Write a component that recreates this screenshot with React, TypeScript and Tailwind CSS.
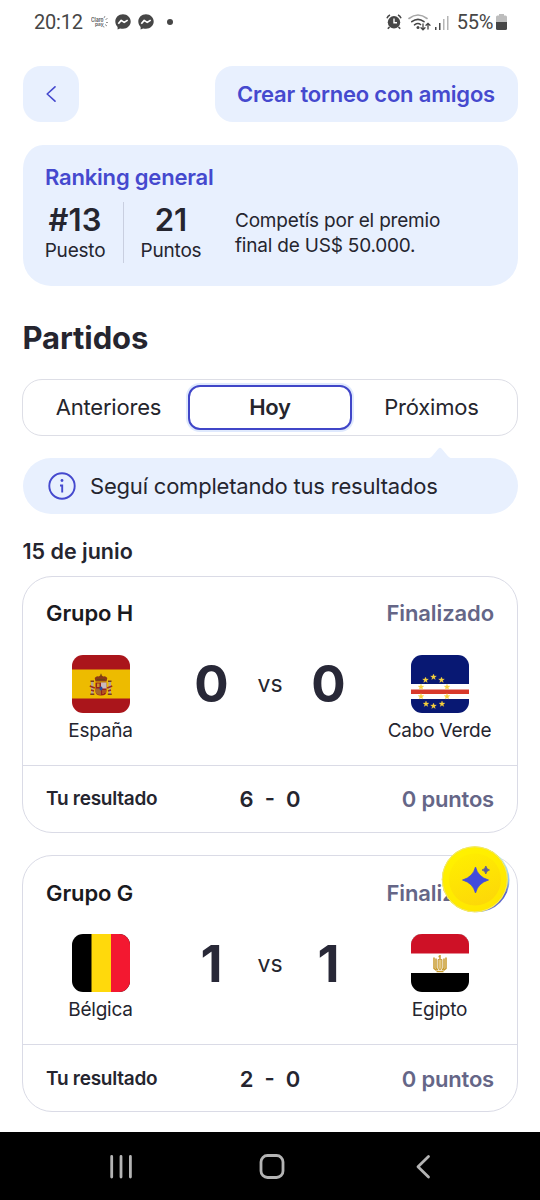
import type { ReactNode } from 'react';

type Match = {
  group: string;
  home: string;
  away: string;
  homeFlag: ReactNode;
  awayFlag: ReactNode;
  score: [number, number];
  guess: [number, number];
};

const STAR = 'M0 -3L.8 -1L2.9 -.9L1.2 .4L1.8 2.4L0 1.3L-1.8 2.4L-1.2 .4L-2.9 -.9L-.8 -1Z';

const CAPE_STARS = [
  [22.5, 22], [14.5, 25], [30.5, 25], [10, 32], [36, 32],
  [10, 41.5], [36, 41.5], [15, 49], [31, 49], [22.5, 51],
];

const SpainFlag = () => (
  <svg viewBox="0 0 58 58" className="size-full">
    <rect width="58" height="58" fill="#aa151b" />
    <rect y="14.5" width="58" height="29" fill="#edbb00" />
    <path d="M19 27h2.5v12H19zM36.5 27H39v12h-2.5z" fill="#b9a58c" />
    <path d="M18.5 25.5h3.5v1.5h-3.5zM36 25.5h3.5V27H36zM18.3 38.5h4V40h-4zM35.8 38.5h4V40h-4z" fill="#7a3b1e" />
    <path d="M17.8 31l5 2M40.2 31l-5 2M19 35l3 1M39 35l-3 1" stroke="#9a2a1b" strokeWidth="1.4" />
    <path d="M23.5 27.5h11V36q0 4.5-5.5 4.5T23.5 36z" fill="#98201c" />
    <path d="M29 27.5h5.5v6H29z" fill="#c9b8bd" />
    <path d="M23.5 33.5H29V40q-5.5 0-5.5-4z" fill="#a8662a" />
    <path d="M25 28.5h2.5V32H25z" fill="#c8922b" />
    <path d="M31 35v4M33 35v3" stroke="#d9a520" strokeWidth=".8" />
    <ellipse cx="29" cy="33.5" rx="1.5" ry="1.9" fill="#274a9c" />
    <path d="M23.5 26.5l-.8-3.5q1.8-2.5 4-1.5L29 20l2.3 1.5q2.2-1 4 1.5l-.8 3.5z" fill="#8a3a16" />
    <path d="M29 18.8v3M25 24.5h8" stroke="#6c4212" />
  </svg>
);

const CapeVerdeFlag = () => (
  <svg viewBox="0 0 58 58" className="size-full">
    <rect width="58" height="58" fill="#081873" />
    <rect y="29" width="58" height="15" fill="#fff" />
    <rect y="34.5" width="58" height="4.5" fill="#d8392b" />
    {CAPE_STARS.map(([x, y]) => (
      <path key={`${x}-${y}`} d={STAR} transform={`translate(${x} ${y})`} fill="#f7d13c" stroke="#f7d13c" strokeWidth=".3" />
    ))}
  </svg>
);

const BelgiumFlag = () => (
  <svg viewBox="0 0 58 58" className="size-full">
    <rect width="58" height="58" fill="#000" />
    <rect x="19.5" width="19.5" height="58" fill="#ffd90c" />
    <rect x="39" width="19" height="58" fill="#f31830" />
  </svg>
);

const EgyptFlag = () => (
  <svg viewBox="0 0 58 58" className="size-full">
    <rect width="58" height="58" fill="#000" />
    <rect width="58" height="39" fill="#fff" />
    <rect width="58" height="19.5" fill="#ce1126" />
    <g fill="none" stroke="#c79a2c">
      <path d="M23 23.5v11l2.5 2M25 24.5V34l2 2M35 23.5v11l-2.5 2M33 24.5V34l-2 2" strokeWidth="1.5" />
      <path d="M29 21v4M27.5 22.5h2M25.5 37.5h7" strokeWidth="1.5" />
    </g>
    <path d="M27 25.5h4v8L29 36l-2-2.5z" fill="#e3c67c" stroke="#b98a20" strokeWidth=".7" />
  </svg>
);

const MATCHES: Match[] = [
  {
    group: 'Grupo H',
    home: 'España',
    away: 'Cabo Verde',
    homeFlag: <SpainFlag />,
    awayFlag: <CapeVerdeFlag />,
    score: [0, 0],
    guess: [6, 0],
  },
  {
    group: 'Grupo G',
    home: 'Bélgica',
    away: 'Egipto',
    homeFlag: <BelgiumFlag />,
    awayFlag: <EgyptFlag />,
    score: [1, 1],
    guess: [2, 0],
  },
];

const MessengerIcon = () => (
  <svg viewBox="0 0 16 16" className="size-4">
    <path d="M8 .3C3.6.3.3 3.5.3 7.6c0 2.2.9 4 2.3 5.3v2.7l2.5-1.2c.9.3 1.9.4 2.9.4 4.4 0 7.7-3.2 7.7-7.2S12.4.3 8 .3z" fill="#464646" />
    <path d="M3.3 9.7l2.9-3.3 3 2 3.5-2.3" fill="none" stroke="#fff" strokeWidth="1.7" strokeLinejoin="round" />
  </svg>
);

const StatusBar = () => (
  <div className="flex h-11 items-center pr-[33px] pl-[34px] font-['Roboto',sans-serif] text-[#464646]">
    <span className="w-[50px] text-[20px] leading-none tracking-[-0.2px]">20:12</span>
    <svg viewBox="0 0 17 14" className="ml-[7px] h-[14px] w-[17px] font-['Inter',sans-serif]">
      <text x="0" y="7" fontSize="5.5" fontWeight="700" textLength="12.5" lengthAdjust="spacingAndGlyphs" fill="#666">Claro</text>
      <text x="4" y="11" fontSize="5" fontWeight="700" textLength="8.5" lengthAdjust="spacingAndGlyphs" fill="#666">pay</text>
      <path d="M13 3l1-2M14.5 5l2-2M15 7.5h2M14 9.5l2 1.5M12.5 11l.5 1.5" stroke="#777" strokeWidth=".8" />
    </svg>
    <div className="ml-[7px] flex gap-[7px]">
      <MessengerIcon />
      <MessengerIcon />
    </div>
    <div className="ml-[13px] size-1.5 rounded-full bg-[#464646]" />
    <svg viewBox="0 0 16 16" className="ml-auto h-4 w-4">
      <circle cx="8" cy="8.3" r="6.2" fill="#464646" />
      <path d="M1 4.2Q1.8 2 4 1M15 4.2Q14.2 2 12 1M3.5 13l-1.7 1.8M12.5 13l1.7 1.8" fill="none" stroke="#464646" strokeWidth="1.6" />
      <path d="M8 4.5v4.2h3" fill="none" stroke="#fff" strokeWidth="1.4" />
    </svg>
    <svg viewBox="0 0 23 17" className="ml-1.5 h-[17px] w-[23px]">
      <g fill="none" strokeLinecap="round">
        <path d="M1 4.5Q10 -2.5 19 4.5" stroke="#a8a8a8" strokeWidth="1.6" />
        <path d="M3.8 7.7Q10 3 16 7.7" stroke="#464646" strokeWidth="1.6" />
        <path d="M6.5 10.8Q10 8.4 12.5 10.5" stroke="#464646" strokeWidth="1.6" />
        <path d="M15 10v5.5M13 13.8l2 2 2-2M20 15V9.5M18 11.3l2-2 2 2" stroke="#464646" strokeWidth="1.3" />
      </g>
      <circle cx="10" cy="13.6" r="1.5" fill="#464646" />
    </svg>
    <svg viewBox="0 0 14 15" className="ml-1 h-[15px] w-[14px]">
      <rect x="0" y="12" width="1.5" height="3" fill="#464646" />
      <rect x="4" y="8" width="1.5" height="7" fill="#464646" />
      <rect x="8" y="4" width="1.5" height="11" fill="#b5b5b5" />
      <rect x="12" y="1" width="1.5" height="14" fill="#b5b5b5" />
    </svg>
    <span className="ml-2 text-[20px] leading-none tracking-[-0.3px]">55%</span>
    <svg viewBox="0 0 11 16" className="ml-[3px] h-4 w-[11px]">
      <path d="M3 0h5v1.5h1.5Q11 1.5 11 3v5H0V3q0-1.5 1.5-1.5H3z" fill="#bdbdbd" />
      <path d="M0 8h11v6.5q0 1.5-1.5 1.5h-8Q0 16 0 14.5z" fill="#464646" />
    </svg>
  </div>
);

const RankingCard = () => (
  <section className="mt-[22.5px] h-[141px] rounded-t-[20px_24px] rounded-b-[28px] bg-[#e8f0fe] px-[22.5px] pt-[18.5px]">
    <h2 className="text-[22px] leading-7 font-semibold tracking-[-0.2px] text-[#4549ce]">Ranking general</h2>
    <div className="mt-[11px] flex items-center">
      <div className="flex w-[60px] flex-col items-center">
        <span className="text-[31px] leading-9 font-semibold">#13</span>
        <span className="text-[19px] leading-[25px] tracking-[-0.2px]">Puesto</span>
      </div>
      <div className="ml-[17.5px] h-[61px] w-px bg-[#c9cfe0]" />
      <div className="ml-[17px] flex w-[61px] flex-col items-center">
        <span className="text-[31px] leading-9 font-semibold">21</span>
        <span className="text-[19px] leading-[25px] tracking-[-0.2px]">Puntos</span>
      </div>
      <p className="ml-[33.5px] text-[19px] leading-[25px] tracking-[-0.2px] whitespace-nowrap">
        Competís por el premio
        <br />
        final de US$ 50.000.
      </p>
    </div>
  </section>
);

const Tabs = () => (
  <div className="-mx-[0.5px] mt-[21px] grid h-[57px] grid-cols-[1fr_164px_1fr] items-center rounded-[20px] border border-[#dddee6] text-center text-[22px] tracking-[-0.2px] text-[#25252d]">
    <button className="pt-px pl-1.5">Anteriores</button>
    <button className="h-[45px] rounded-xl border-2 border-[#4046c8] bg-white pt-px font-semibold shadow-[0_0_0_2px_#dfe9fd]">
      Hoy
    </button>
    <button className="pt-px pr-1.5">Próximos</button>
  </div>
);

const Team = ({ name, flag }: { name: string; flag: ReactNode }) => (
  <div className="flex w-[110px] flex-col items-center">
    <div className="size-[58px] overflow-hidden rounded-[11px]">{flag}</div>
    <span className="mt-1.5 text-[19px] leading-6 tracking-[-0.2px] whitespace-nowrap">{name}</span>
  </div>
);

const MatchCard = ({ match }: { match: Match }) => (
  <article className="h-[257px] rounded-[30px] border border-[#dadbe6]">
    <div className="h-[189px] border-b border-[#dadbe6] pr-[22.5px] pl-[22.5px] pt-[22.5px]">
      <div className="flex justify-between px-[0.5px] text-[22px] leading-7 tracking-[-0.1px]">
        <h3 className="font-semibold text-[#1a1a1f]">{match.group}</h3>
        <span className="font-semibold text-[#656687]">Finalizado</span>
      </div>
      <div className="mt-[27.5px] flex">
        <Team name={match.home} flag={match.homeFlag} />
        <div className="flex h-[58px] flex-1 items-center justify-center pt-0.5">
          <span className="w-[46px] text-center text-[51px] font-bold text-[#282837]">{match.score[0]}</span>
          <span className="w-[71px] text-center text-[23px]">vs</span>
          <span className="w-[46px] text-center text-[51px] font-bold text-[#282837]">{match.score[1]}</span>
        </div>
        <Team name={match.away} flag={match.awayFlag} />
      </div>
    </div>
    <div className="grid h-[66px] grid-cols-3 items-center px-[23px] pt-0.5">
      <span className="text-[19px] font-semibold tracking-[-0.25px]">Tu resultado</span>
      <span className="text-center text-[22px] font-semibold whitespace-pre">
        {match.guess[0]}  -  {match.guess[1]}
      </span>
      <span className="text-right text-[22px] font-semibold tracking-[-0.2px] text-[#656687]">0 puntos</span>
    </div>
  </article>
);

const SparkleButton = () => (
  <button className="absolute top-[845px] left-[441px] size-[70px]">
    <svg viewBox="0 0 70 70" className="size-full">
      <defs>
        <linearGradient id="edge" x1="1" y1="0" x2=".3" y2="1">
          <stop offset=".15" stopColor="#b9f0f5" />
          <stop offset=".35" stopColor="#8fc4f0" />
          <stop offset=".5" stopColor="#5661cc" />
          <stop offset=".75" stopColor="#6670d8" />
          <stop offset="1" stopColor="#b9f5f5" />
        </linearGradient>
        <linearGradient id="coin" x1=".2" y1="0" x2=".8" y2="1">
          <stop offset="0" stopColor="#fff200" />
          <stop offset="1" stopColor="#ffe600" />
        </linearGradient>
        <linearGradient id="face" x1=".2" y1="0" x2=".6" y2="1">
          <stop offset="0" stopColor="#ffee00" />
          <stop offset="1" stopColor="#fdd808" />
        </linearGradient>
      </defs>
      <circle cx="36.2" cy="35" r="32.3" fill="url(#edge)" />
      <circle cx="33.8" cy="34.3" r="33" fill="url(#coin)" />
      <circle cx="33.8" cy="34.3" r="32.5" fill="none" stroke="#efe678" />
      <circle cx="34" cy="34.5" r="26" fill="url(#face)" />
      <path d="M34.5 22Q37 32 47.5 35Q37 38 34.5 48Q32 38 21.5 35Q32 32 34.5 22Z" fill="#424bdc" stroke="#424bdc" strokeWidth=".8" />
      <path d="M44.8 21Q45.5 24.3 48.5 25Q45.5 25.7 44.8 29Q44.1 25.7 41 25Q44.1 24.3 44.8 21Z" fill="#5a5c9a" stroke="#5a5c9a" strokeWidth=".8" />
    </svg>
  </button>
);

const NavBar = () => (
  <nav className="flex h-[68px] items-center bg-black">
    <svg viewBox="0 0 540 68" className="h-[68px] w-full" fill="none" stroke="#b4b4b4" strokeWidth="2.8" strokeLinecap="round" strokeLinejoin="round">
      <path d="M111.7 24.5V45M121 24.5V45M130.4 24.5V45" />
      <rect x="261" y="23.5" width="22" height="22" rx="6.5" />
      <path d="M428.5 24.5L418 34.7L428.5 45" />
    </svg>
  </nav>
);

export default function App() {
  return (
    <div className="relative flex h-[1200px] w-[540px] flex-col overflow-hidden bg-white font-['Inter',sans-serif] text-[#25252f]">
      <StatusBar />
      <main className="flex-1 px-[22.5px] pt-[22px]">
        <header className="flex h-14 justify-between">
          <button className="flex size-14 items-center justify-center rounded-[18px] bg-[#e8f0fe]">
            <svg viewBox="0 0 10 16" className="h-4 w-2.5" fill="none" stroke="#4549ce" strokeWidth="1.6" strokeLinecap="round" strokeLinejoin="round">
              <path d="M9 .8L1.2 8L9 15.2" />
            </svg>
          </button>
          <button className="w-[303px] rounded-[18px] bg-[#e8f0fe] text-[22px] font-semibold tracking-[-0.2px] text-[#4549ce]">
            Crear torneo con amigos
          </button>
        </header>

        <RankingCard />

        <h1 className="mt-8 text-[31px] leading-10 font-bold tracking-[-0.1px]">Partidos</h1>

        <Tabs />

        <div className="relative mt-[22.5px] flex h-14 items-center rounded-full bg-[#e8f0fe] pl-[25px]">
          <svg viewBox="0 0 24 11" className="absolute -top-[11px] left-[405px] h-[11.5px] w-6">
            <path d="M0 11Q2 11 4 9L10.5 1.2Q12 0 13.5 1.2L20 9Q22 11 24 11Z" fill="#e8f0fe" />
          </svg>
          <svg viewBox="0 0 28 28" className="size-7" fill="none" stroke="#4549ce" strokeWidth="1.9">
            <circle cx="14" cy="14" r="12.7" />
            <path d="M12 13.5h2.2v7" />
            <circle cx="14" cy="8.5" r="1.4" fill="#4549ce" stroke="none" />
          </svg>
          <span className="pt-px ml-[14.5px] text-[22px] tracking-[-0.2px]">Seguí completando tus resultados</span>
        </div>

        <h2 className="mt-[22.5px] text-[21.5px] leading-7 font-semibold">15 de junio</h2>

        <div className="-mx-[0.5px] mt-[11px] flex flex-col gap-[22.5px]">
          {MATCHES.map(match => (
            <MatchCard key={match.group} match={match} />
          ))}
        </div>
      </main>
      <NavBar />
      <SparkleButton />
    </div>
  );
}
